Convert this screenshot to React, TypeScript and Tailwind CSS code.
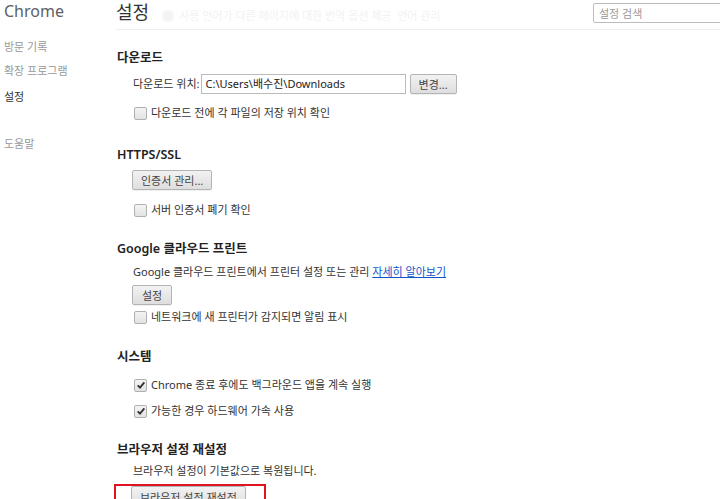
import type { ReactNode } from 'react'

const font = { fontFamily: '"Noto Sans", "Noto Sans CJK KR", sans-serif' }

function Checkbox({ checked, children }: { checked?: boolean; children: ReactNode }) {
  return (
    <div className="flex h-5 items-center gap-[4px] pl-[17px] text-[11px] leading-5 text-[#333]">
      <span className="flex h-[13px] w-[13px] shrink-0 items-center justify-center rounded-[2px] border border-[#b0b0b0] bg-gradient-to-b from-[#f4f4f4] to-[#e2e2e2]">
        {checked && (
          <svg viewBox="0 0 12 12" className="h-[10px] w-[10px]">
            <path d="M2 6.5 L4.8 9.2 L10 2.8" fill="none" stroke="#333" strokeWidth="2.2" />
          </svg>
        )}
      </span>
      <span>{children}</span>
    </div>
  )
}

function Button({ children, className = '' }: { children: ReactNode; className?: string }) {
  return (
    <button
      className={`flex h-5 items-center rounded-[2px] border border-[#b4b4b4] bg-gradient-to-b from-[#f2f2f2] to-[#dedede] px-[8px] text-[11px] leading-none text-[#444] shadow-[0_1px_0_rgba(0,0,0,0.06)] ${className}`}
    >
      {children}
    </button>
  )
}

function Heading({ children, className = '' }: { children: ReactNode; className?: string }) {
  return <h3 className={`h-5 text-[12.5px] font-semibold leading-5 text-[#222] ${className}`}>{children}</h3>
}

export default function App() {
  return (
    <div className="flex h-[499px] w-[720px] overflow-hidden bg-white" style={font}>
      <nav className="w-[116px] shrink-0 pl-1">
        <div className="h-[23px] text-[16px] leading-[23px] text-[#5c6166]">Chrome</div>
        <ul className="text-[11px] text-[#999]">
          <li className="mt-[14px] h-5 leading-5">방문 기록</li>
          <li className="mt-1 h-5 leading-5">확장 프로그램</li>
          <li className="mt-[6px] h-5 leading-5 text-[#333]">설정</li>
          <li className="mt-[27px] h-5 leading-5">도움말</li>
        </ul>
      </nav>

      <main className="flex-1">
        <header className="relative flex h-[30px] items-start border-b border-[#eee]">
          <h1 className="mt-[1px] text-[18px] leading-[22px] text-[#333]">설정</h1>
          <div className="ml-[13px] mt-[8px] flex items-center gap-[5px] text-[11px] text-[#f2f2f2]">
            <span className="h-[12px] w-[12px] rounded-full bg-[#f4f4f4]" />
            <span>사용 언어가 다른 페이지에 대한 번역 옵션 제공&nbsp;&nbsp;언어 관리</span>
          </div>
          <input
            placeholder="설정 검색"
            className="absolute right-[-4px] top-[3px] h-[20px] w-[131px] rounded-[2px] border border-[#bcbcbc] px-[5px] text-[11px] text-[#333] placeholder:text-[#999]"
          />
        </header>

        <div className="pl-[1px]">
          <Heading className="mt-[18px]">다운로드</Heading>
          <div className="mt-[6px] flex h-5 items-center pl-[16px] text-[11px] text-[#333]">
            <span>다운로드 위치:</span>
            <div className="ml-[1px] flex h-5 w-[205px] items-center border border-[#bbb] px-[4px] text-[#222]">
              C:\Users\배수진\Downloads
            </div>
            <Button className="ml-[4px]">변경...</Button>
          </div>
          <div className="mt-[9px]">
            <Checkbox>다운로드 전에 각 파일의 저장 위치 확인</Checkbox>
          </div>

          <Heading className="mt-[22px]">HTTPS/SSL</Heading>
          <div className="mt-[5px] flex h-5 pl-[15px]">
            <Button>인증서 관리...</Button>
          </div>
          <div className="mt-[10px]">
            <Checkbox>서버 인증서 폐기 확인</Checkbox>
          </div>

          <Heading className="mt-[19px]">Google 클라우드 프린트</Heading>
          <div className="mt-[3px] h-5 pl-[16px] text-[11px] leading-5 text-[#333]">
            Google 클라우드 프린트에서 프린터 설정 또는 관리{' '}
            <a className="text-[#1155cc] underline">자세히 알아보기</a>
          </div>
          <div className="mt-[3px] flex h-5 pl-[15px]">
            <Button className="px-[9px]">설정</Button>
          </div>
          <div className="mt-[2px]">
            <Checkbox>네트워크에 새 프린터가 감지되면 알림 표시</Checkbox>
          </div>

          <Heading className="mt-[20px]">시스템</Heading>
          <div className="mt-[8px]">
            <Checkbox checked>Chrome 종료 후에도 백그라운드 앱을 계속 실행</Checkbox>
          </div>
          <div className="mt-[6px]">
            <Checkbox checked>가능한 경우 하드웨어 가속 사용</Checkbox>
          </div>

          <Heading className="mt-[19px]">브라우저 설정 재설정</Heading>
          <div className="mt-[1px] h-5 pl-[16px] text-[11px] leading-5 text-[#333]">
            브라우저 설정이 기본값으로 복원됩니다.
          </div>
          <div className="-ml-[3px] mt-[3px] flex h-[22px] w-[152px] border-2 border-[#e0141e] pl-[15px]">
            <Button className="h-[22px] px-[8px]">브라우저 설정 재설정</Button>
          </div>
        </div>
      </main>
    </div>
  )
}
